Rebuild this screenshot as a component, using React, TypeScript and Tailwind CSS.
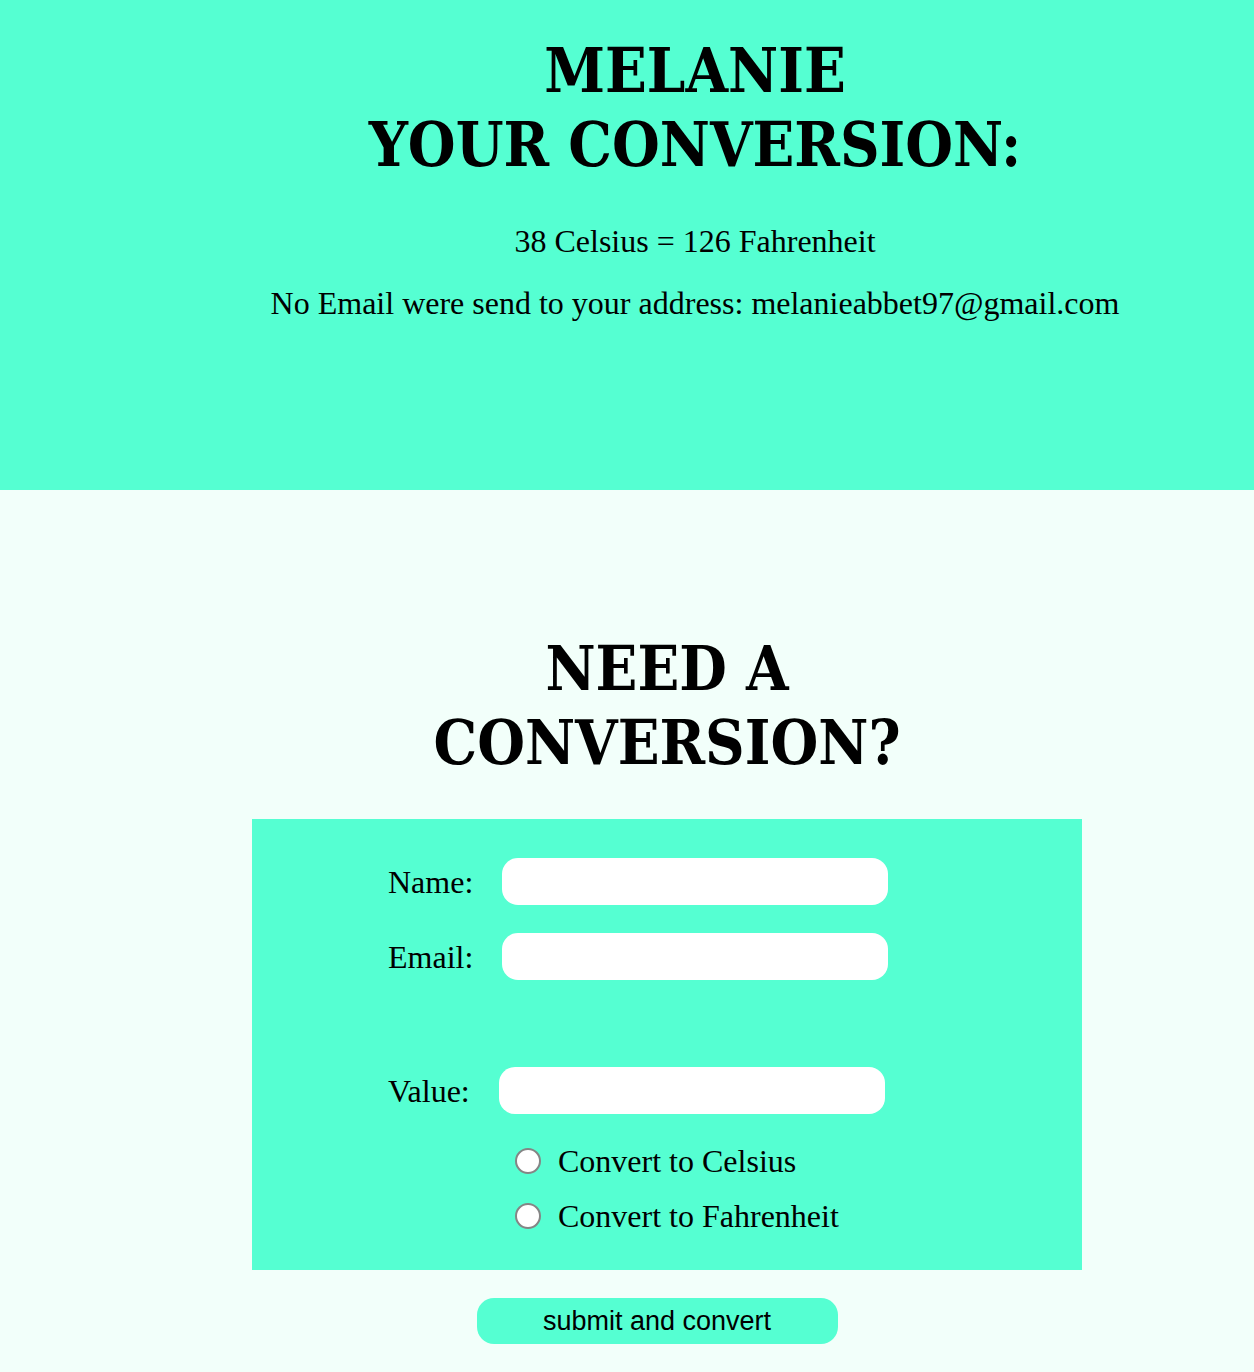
import React from "react";

function Field({ label }: { label: string }) {
  return (
    <div className="flex items-center gap-[29px]">
      <label className="text-[32px] leading-none">{label}</label>
      <input type="text" className="h-[47px] w-[386px] rounded-[16px] bg-white outline-none" />
    </div>
  );
}

function Radio({ label }: { label: string }) {
  return (
    <label className="flex items-center gap-[17px]">
      <input
        type="radio"
        name="unit"
        className="appearance-none h-[26px] w-[26px] rounded-full border-2 border-[#858585] bg-white"
      />
      <span className="text-[32px] leading-none">{label}</span>
    </label>
  );
}

export default function App() {
  const heading = "font-['DejaVu_Serif',serif] font-bold [font-stretch:condensed] text-[61px] leading-[74px] text-black";

  return (
    <div className="min-h-[1372px] bg-[#f2fffa] font-['Liberation_Serif',serif] text-black">
      <header className="h-[490px] bg-[#55ffd2] pl-[136px] pt-[34px] text-center">
        <h1 className={heading}>
          MELANIE
          <br />
          YOUR CONVERSION:
        </h1>
        <p className="mt-[35px] text-[32px]">38 Celsius = 126 Fahrenheit</p>
        <p className="mt-[14px] text-[32px]">No Email were send to your address: melanieabbet97@gmail.com</p>
      </header>

      <main className="flex flex-col items-center pl-[80px] pt-[142px]">
        <h2 className={`${heading} w-[520px] text-center`}>NEED A CONVERSION?</h2>

        <form className="mt-[39px] w-[830px] bg-[#55ffd2] pl-[136px] pt-[39px] pb-[38px]">
          <div className="flex flex-col gap-[28px]">
            <Field label="Name:" />
            <Field label="Email:" />
          </div>
          <div className="mt-[87px]">
            <Field label="Value:" />
          </div>
          <div className="mt-[31px] ml-[127px] flex flex-col gap-[23px]">
            <Radio label="Convert to Celsius" />
            <Radio label="Convert to Fahrenheit" />
          </div>
        </form>

        <button
          type="submit"
          className="mt-[28px] mr-[20px] h-[46px] w-[361px] rounded-[17px] bg-[#55ffd2] font-['Liberation_Sans',sans-serif] text-[27px]"
        >
          submit and convert
        </button>
      </main>
    </div>
  );
}
